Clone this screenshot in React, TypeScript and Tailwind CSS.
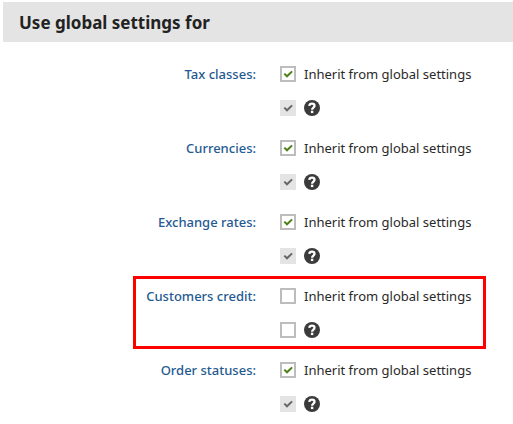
import { useState } from "react";

type Setting = {
  id: string;
  label: string;
  inherited: boolean;
  highlighted?: boolean;
};

const settings: Setting[] = [
  { id: "tax-classes", label: "Tax classes", inherited: true },
  { id: "currencies", label: "Currencies", inherited: true },
  { id: "exchange-rates", label: "Exchange rates", inherited: true },
  { id: "customers-credit", label: "Customers credit", inherited: false, highlighted: true },
  { id: "order-statuses", label: "Order statuses", inherited: true },
];

type CheckboxProps = {
  id?: string;
  name?: string;
  checked: boolean;
  locked?: boolean;
  onChange: (checked: boolean) => void;
};

function Checkbox({ id, name, checked, locked = false, onChange }: CheckboxProps) {
  const box = locked ? "border-[#e4e4e4] bg-[#e4e4e4]" : "border-[#bfbcbc] bg-white";
  return (
    <span className="grid size-4 shrink-0">
      <input
        id={id}
        aria-label={name}
        type="checkbox"
        checked={checked}
        disabled={locked}
        onChange={(event) => onChange(event.target.checked)}
        className={`col-start-1 row-start-1 m-0 size-4 appearance-none border-2 ${box}`}
      />
      {checked && (
        <svg
          viewBox="0 0 16 16"
          className={`pointer-events-none col-start-1 row-start-1 size-4 ${locked ? "text-[#666666]" : "text-[#4b8015]"}`}
          fill="none"
          stroke="currentColor"
          strokeWidth="2"
          aria-hidden="true"
        >
          <path d="M4.3 7.6 7 10.3 12.1 5.4" />
        </svg>
      )}
    </span>
  );
}

function HelpButton({ label }: { label: string }) {
  return (
    <button type="button" aria-label={`Help: ${label}`} className="size-4 shrink-0">
      <svg viewBox="0 0 16 16" className="size-4" aria-hidden="true">
        <circle cx="8" cy="8" r="8" fill="#3b3b3b" />
        <path
          d="M5.3 5.8C5.5 4.3 6.5 3.6 8 3.6c1.5 0 2.5.8 2.5 2.1 0 1.9-2.4 1.8-2.4 4"
          fill="none"
          stroke="#fff"
          strokeWidth="2.3"
        />
        <rect x="6.9" y="10.7" width="2.4" height="2.4" fill="#fff" />
      </svg>
    </button>
  );
}

function SettingGroup({ setting }: { setting: Setting }) {
  const [inherited, setInherited] = useState(setting.inherited);
  const [enabled, setEnabled] = useState(setting.inherited);

  return (
    <div role="group" aria-labelledby={`${setting.id}-label`} className="relative flex gap-6 py-3">
      <div id={`${setting.id}-label`} className="w-64 shrink-0 text-right font-medium text-[#1f5a92]">
        {setting.label}:
      </div>
      <div className="flex min-w-0 flex-col gap-[18px]">
        <div className="flex gap-2">
          <Checkbox id={setting.id} checked={inherited} onChange={setInherited} />
          <label htmlFor={setting.id}>Inherit from global settings</label>
        </div>
        <div className="flex gap-2">
          <Checkbox name={setting.label} checked={enabled} locked={inherited} onChange={setEnabled} />
          <HelpButton label={setting.label} />
        </div>
      </div>
      {setting.highlighted && (
        <div className="pointer-events-none absolute top-0 left-[133px] h-[73px] w-[353px] border-3 border-[#ff0000]" />
      )}
    </div>
  );
}

export default function App() {
  return (
    <main className="min-h-screen bg-white pt-0.5 font-['Noto_Sans','Open_Sans',sans-serif] text-[13px] leading-4 text-[#292929]">
      <h2 className="ml-[3px] bg-[#e4e4e4] px-4 pt-[9px] pb-[7px] text-[17px] leading-6 font-bold text-[#222222]">
        Use global settings for
      </h2>
      <form className="pt-3">
        {settings.map((setting) => (
          <SettingGroup key={setting.id} setting={setting} />
        ))}
      </form>
    </main>
  );
}
